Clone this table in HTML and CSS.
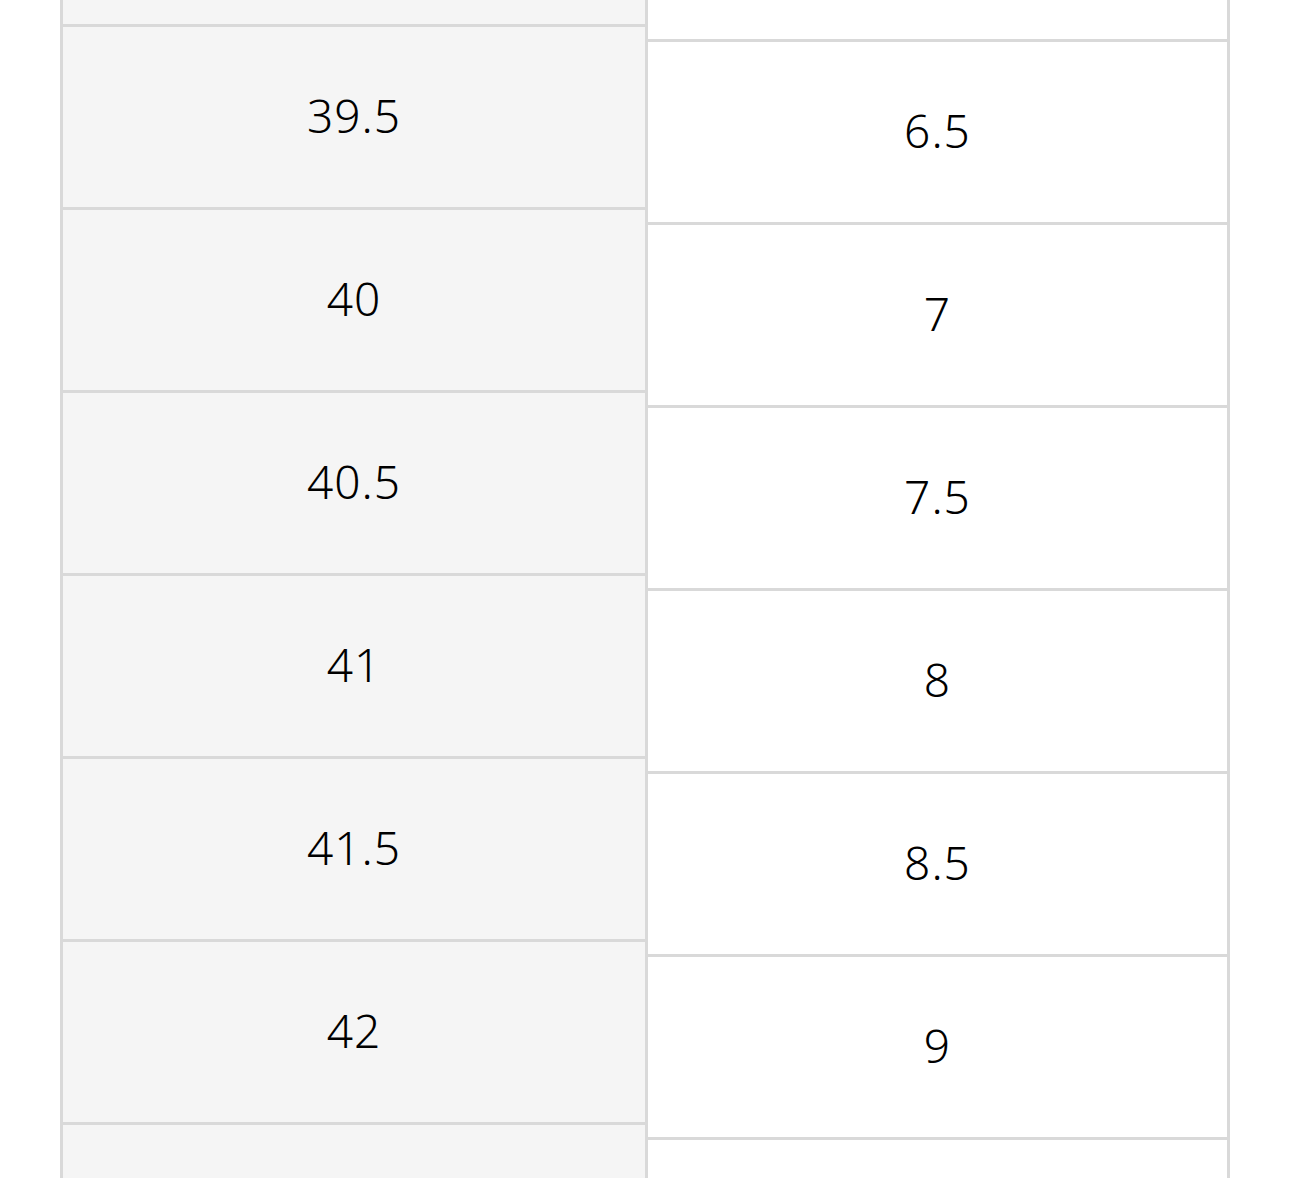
FILE: index.html
```html
<!DOCTYPE html>
<html>
<head>
<meta charset="utf-8">
<link rel="stylesheet" href="styles.css">
</head>
<body>
<div class="table">
  <div class="col col-eu">
    <div class="cell cell-cut-top-left"></div>
    <div class="cell">39.5</div>
    <div class="cell">40</div>
    <div class="cell">40.5</div>
    <div class="cell">41</div>
    <div class="cell">41.5</div>
    <div class="cell">42</div>
    <div class="cell cell-open"></div>
  </div>
  <div class="col col-us">
    <div class="cell cell-cut-top-right"></div>
    <div class="cell">6.5</div>
    <div class="cell">7</div>
    <div class="cell">7.5</div>
    <div class="cell">8</div>
    <div class="cell">8.5</div>
    <div class="cell">9</div>
    <div class="cell cell-open"></div>
  </div>
</div>
</body>
</html>
```

FILE: styles.css
```css
html, body {
  margin: 0;
  padding: 0;
  background: #ffffff;
  height: 1178px;
  overflow: hidden;
}
.table {
  display: flex;
  margin: 0 60px;
  font-family: "Noto Sans", sans-serif;
  font-weight: 350;
  color: #000;
}
.col {
  display: flex;
  flex-direction: column;
  border-right: 3px solid #d9d9d9;
}
.col-eu {
  width: 582px;
  background: #f5f5f5;
  border-left: 3px solid #d9d9d9;
}
.col-us {
  width: 579px;
  background: #fff;
}
.cell {
  box-sizing: border-box;
  height: 183px;
  padding-bottom: 5px;
  border-bottom: 3px solid #d9d9d9;
  display: flex;
  align-items: center;
  justify-content: center;
  font-size: 46px;
  line-height: 1;
  letter-spacing: 1px;
}
.cell-cut-top-left {
  height: 27px;
  padding-bottom: 0;
}
.cell-cut-top-right {
  height: 42px;
  padding-bottom: 0;
}
.cell-open {
  border-bottom: none;
  height: 200px;
}
```
